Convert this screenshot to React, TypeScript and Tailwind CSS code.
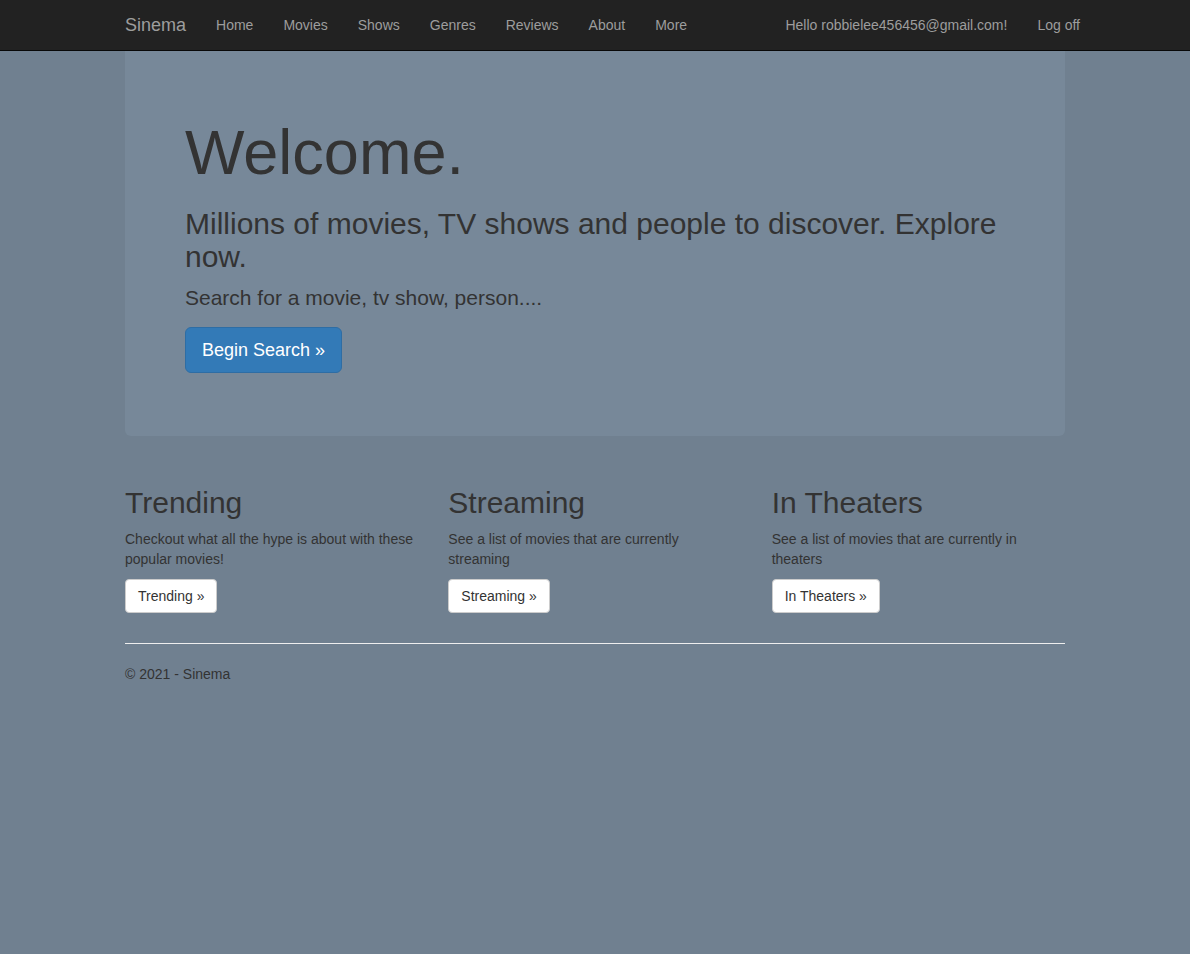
import React from "react";

const navLinks = ["Home", "Movies", "Shows", "Genres", "Reviews", "About", "More"];

const features = [
  {
    title: "Trending",
    text: "Checkout what all the hype is about with these popular movies!",
    button: "Trending »",
  },
  {
    title: "Streaming",
    text: "See a list of movies that are currently streaming",
    button: "Streaming »",
  },
  {
    title: "In Theaters",
    text: "See a list of movies that are currently in theaters",
    button: "In Theaters »",
  },
];

export default function App() {
  return (
    <div className="min-h-[954px] bg-[#708090] text-[#333] text-[14px] leading-[20px] font-['Liberation_Sans',Arial,sans-serif]">
      {/* Navbar */}
      <nav className="h-[51px] bg-[#222] border-b border-[#080808]">
        <div className="w-[970px] mx-auto flex items-center h-[50px]">
          <a className="px-[15px] text-[18px] leading-[20px] text-[#9d9d9d]">Sinema</a>
          <ul className="flex">
            {navLinks.map((link) => (
              <li key={link}>
                <a className="block px-[15px] py-[15px] text-[#9d9d9d]">{link}</a>
              </li>
            ))}
          </ul>
          <ul className="flex ml-auto -mr-[15px]">
            <li>
              <a className="block px-[15px] py-[15px] text-[#9d9d9d]">Hello robbielee456456@gmail.com!</a>
            </li>
            <li>
              <a className="block px-[15px] py-[15px] text-[#9d9d9d]">Log off</a>
            </li>
          </ul>
        </div>
      </nav>

      <div className="w-[970px] mx-auto px-[15px]">
        {/* Jumbotron */}
        <div className="bg-[#778899] rounded-b-[6px] px-[60px] pt-[67px] pb-[48px] mb-[30px]">
          <h1 className="text-[63px] leading-[1.1] mb-[20px]">Welcome.</h1>
          <h2 className="text-[30px] leading-[1.1] mb-[10px]">
            Millions of movies, TV shows and people to discover. Explore now.
          </h2>
          <p className="text-[21px] leading-[30px] mb-[14px]">Search for a movie, tv show, person....</p>
          <div className="mb-[15px]">
            <a className="inline-block px-[16px] py-[10px] text-[18px] leading-[24px] text-white bg-[#337ab7] border border-[#2e6da4] rounded-[6px]">
              Begin Search »
            </a>
          </div>
        </div>

        {/* Feature columns */}
        <div className="grid grid-cols-3 -mx-[15px]">
          {features.map((f) => (
            <div key={f.title} className="px-[15px]">
              <h2 className="text-[30px] leading-[33px] mt-[20px] mb-[10px]">{f.title}</h2>
              <p className="mb-[10px]">{f.text}</p>
              <p className="mb-[10px]">
                <a className="inline-block px-[12px] py-[6px] bg-white border border-[#ccc] rounded-[4px] text-[#333]">
                  {f.button}
                </a>
              </p>
            </div>
          ))}
        </div>

        <hr className="mt-[20px] mb-[20px] border-0 border-t border-[#eee]" />

        <footer>
          <p>© 2021 - Sinema</p>
        </footer>
      </div>
    </div>
  );
}
